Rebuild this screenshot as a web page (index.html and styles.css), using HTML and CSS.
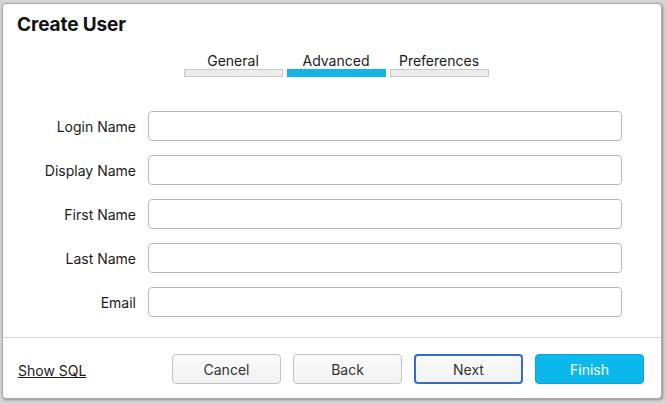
FILE: index.html
```html
<!DOCTYPE html>
<html>
<head>
<meta charset="utf-8">
<link rel="stylesheet" href="styles.css">
</head>
<body>
<div class="dialog">
  <h1 class="title">Create User</h1>
  <div class="tabs">
    <div class="tab"><span class="tab-label">General</span><span class="tab-bar"></span></div>
    <div class="tab active"><span class="tab-label">Advanced</span><span class="tab-bar"></span></div>
    <div class="tab"><span class="tab-label">Preferences</span><span class="tab-bar"></span></div>
  </div>
  <div class="form">
    <label class="label">Login Name</label><input class="field" type="text">
    <label class="label">Display Name</label><input class="field" type="text">
    <label class="label">First Name</label><input class="field" type="text">
    <label class="label">Last Name</label><input class="field" type="text">
    <label class="label">Email</label><input class="field" type="text">
  </div>
  <div class="footer">
    <a class="sql-link">Show SQL</a>
    <div class="buttons">
      <button class="btn">Cancel</button>
      <button class="btn">Back</button>
      <button class="btn btn-focus">Next</button>
      <button class="btn btn-primary">Finish</button>
    </div>
  </div>
</div>
</body>
</html>
```
FILE: styles.css
```css
* { box-sizing: border-box; }
html, body { margin: 0; }
body {
  width: 666px;
  height: 404px;
  padding: 3px 4px 5px 2px;
  background: #d6d6d6;
  font-family: Inter, "Liberation Sans", sans-serif;
  color: #1a1a1a;
  overflow: hidden;
}
.dialog {
  width: 660px;
  height: 396px;
  background: #ffffff;
  border: 1px solid #a8a8a8;
  border-radius: 4px;
  box-shadow: 1px 1px 3px rgba(0,0,0,0.35);
  display: flex;
  flex-direction: column;
}
.title {
  margin: 0;
  padding: 9px 0 0 14px;
  font-size: 19px;
  line-height: 24px;
  font-weight: 700;
  letter-spacing: -0.1px;
  color: #111;
}
.tabs {
  display: flex;
  justify-content: center;
  gap: 4px;
  margin: 16px 0 0 8px;
}
.tab {
  width: 99px;
  display: flex;
  flex-direction: column;
  align-items: center;
}
.tab-label {
  font-size: 14px;
  line-height: 16px;
  height: 16px;
}
.tab-bar {
  display: block;
  width: 100%;
  height: 8px;
  background: #ececec;
  border: 1px solid #c9c9c9;
}
.tab.active .tab-bar {
  background: #14b4e6;
  border-color: #14b4e6;
}
.form {
  margin-top: 34px;
  display: grid;
  grid-template-columns: 133px 474px;
  column-gap: 12px;
  row-gap: 14px;
  align-items: center;
}
.label {
  text-align: right;
  font-size: 14px;
  line-height: 17px;
}
.field {
  height: 30px;
  border: 1px solid #b9b9b9;
  border-radius: 4px;
  background: #fff;
  margin: 0;
  padding: 0 6px;
  font: inherit;
}
.footer {
  margin-top: auto;
  border-top: 1px solid #d4d4d4;
  padding: 16px 17px 14px 15px;
  display: flex;
  align-items: center;
  justify-content: space-between;
}
.sql-link {
  font-size: 14px;
  text-decoration: underline;
  color: #1a1a1a;
  margin-top: 3px;
}
.buttons {
  display: flex;
  gap: 12px;
}
.btn {
  width: 109px;
  height: 30px;
  margin: 0;
  border: 1px solid #c2c2c2;
  border-radius: 4px;
  background: linear-gradient(#fafafa, #f2f2f2);
  font-family: Inter, "Liberation Sans", sans-serif;
  font-size: 14px;
  color: #333;
}
.btn-focus {
  border: 2px solid #2f6fcb;
}
.btn-primary {
  background: #0bb8ec;
  border-color: #0aa4d6;
  color: #ffffff;
}
```
